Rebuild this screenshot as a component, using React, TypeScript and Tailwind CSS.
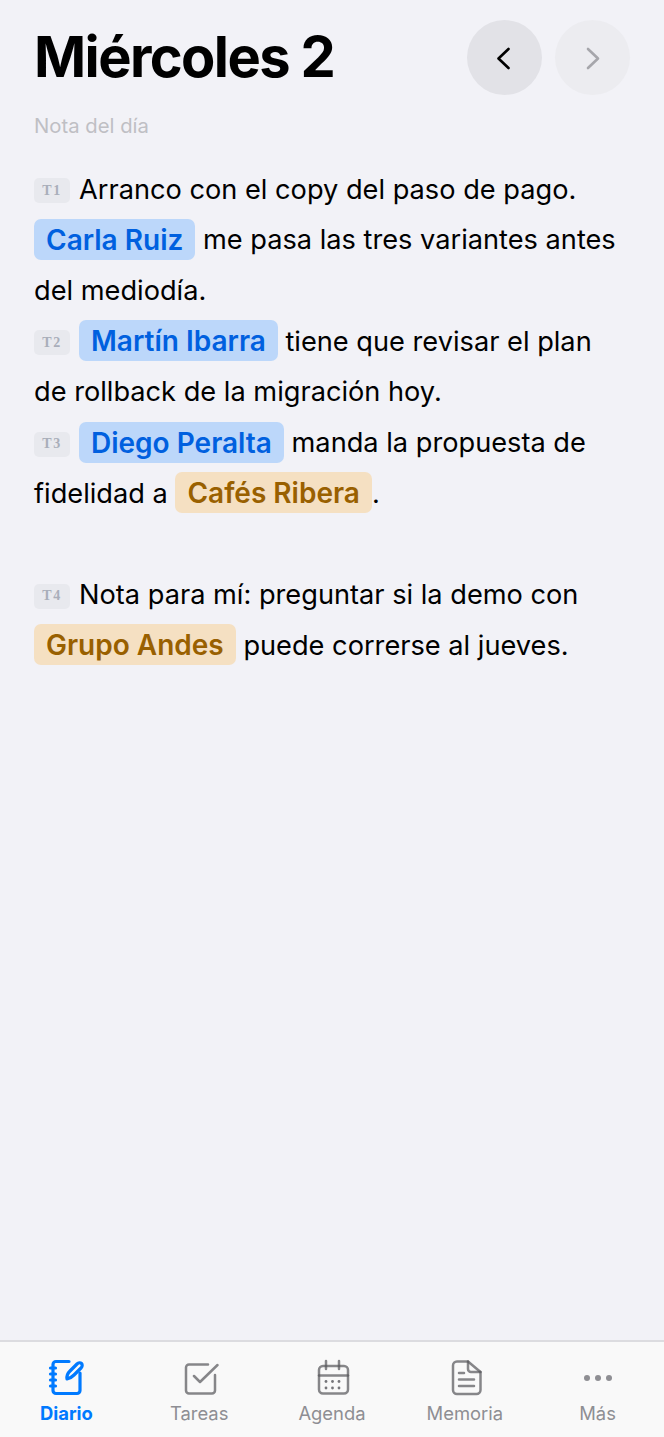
const blue = 'rounded-[7px] bg-[#bcd7fa] px-3 py-[3.500px] text-[28px] leading-none font-semibold text-[#0060df]';
const amber = 'rounded-[7px] bg-[#f5e0c2] px-3 py-[3.500px] text-[28px] leading-none font-semibold text-[#996000]';

function Tag({ label }: { label: string }) {
  return (
    <span className="mr-[9px] inline-flex h-[25px] w-[36px] translate-y-[-4px] items-center justify-center rounded-[5px] bg-[#e8e9ee] [font-family:'Liberation_Serif',serif] text-[14px] font-bold leading-none tracking-[1.500px] text-[#a9aeba]">
      {label}
    </span>
  );
}

function Mention({ kind, children }: { kind: 'person' | 'company'; children: string }) {
  return <span className={kind === 'person' ? blue : amber}>{children}</span>;
}

const tabs = [
  { label: 'Diario', active: true },
  { label: 'Tareas' },
  { label: 'Agenda' },
  { label: 'Memoria' },
  { label: 'Más' },
];

function TabIcon({ label }: { label: string }) {
  if (label === 'Diario') {
    return (
      <svg width="40" height="40" viewBox="0 0 40 40" fill="none" stroke="currentColor" strokeWidth="3.200" strokeLinecap="round" strokeLinejoin="round">
        <path d="M23 3.500H10a3 3 0 0 0-3 3v26a3 3 0 0 0 3 3h21a3 3 0 0 0 3-3V15" />
        <path d="M4.500 10h5M4.500 16h5M4.500 22h5M4.500 28h5" />
        <path d="M21 21c-.5-3 1-6 3-8l7-7c1.500-1.500 3.500-1.500 4.500-.5s1 3-.5 4.500l-7 7c-2 2-4.500 3.500-7 4z" />
      </svg>
    );
  }
  if (label === 'Tareas') {
    return (
      <svg width="40" height="40" viewBox="0 0 40 40" fill="none" stroke="#55555a" strokeOpacity=".7" strokeWidth="2.500" strokeLinecap="round" strokeLinejoin="round">
        <path d="M29 6.500H10a3 3 0 0 0-3 3v23a3 3 0 0 0 3 3h23a3 3 0 0 0 3-3V17" />
        <path d="M15 18l6 6L38.500 7" />
      </svg>
    );
  }
  if (label === 'Agenda') {
    return (
      <svg width="40" height="40" viewBox="0 0 40 40" fill="none" stroke="#55555a" strokeOpacity=".7" strokeWidth="2.500" strokeLinecap="round" strokeLinejoin="round">
        <rect x="7" y="8" width="29" height="27.500" rx="4" />
        <path d="M7 17.500h29" />
        <path d="M14 3v8" />
        <path d="M27 3v8" />
        <g fill="#55555a" fillOpacity=".8" stroke="none">
          <circle cx="14" cy="23.500" r="1.400" />
          <circle cx="20.500" cy="23.500" r="1.400" />
          <circle cx="27" cy="23.500" r="1.400" />
          <circle cx="14" cy="30" r="1.400" />
          <circle cx="20.500" cy="30" r="1.400" />
          <circle cx="27" cy="30" r="1.400" />
        </g>
      </svg>
    );
  }
  if (label === 'Memoria') {
    return (
      <svg width="40" height="40" viewBox="0 0 40 40" fill="none" stroke="#55555a" strokeOpacity=".7" strokeWidth="2.500" strokeLinecap="round" strokeLinejoin="round">
        <path d="M12 3.500h11L35.500 14v18a4 4 0 0 1-4 4H12a4 4 0 0 1-4-4V7.500a4 4 0 0 1 4-4z" />
        <path d="M23 3.500V11a3 3 0 0 0 3 3h9.500" />
        <path d="M14 15h5M14 21.500h15M14 28h15" />
      </svg>
    );
  }
  return (
    <svg width="40" height="40" viewBox="0 0 40 40" fill="#8e8e93">
      <circle cx="9" cy="20" r="3" />
      <circle cx="20" cy="20" r="3" />
      <circle cx="31" cy="20" r="3" />
    </svg>
  );
}

export default function App() {
  return (
    <div className="flex min-h-[1437px] w-[664px] flex-col bg-[#f2f2f7] font-['Inter',sans-serif] text-black">
      <header className="flex items-start justify-between px-[34px] pt-[20px]">
        <h1 className="text-[56px] font-bold leading-[75px] tracking-[-1.600px]">Miércoles 2</h1>
        <div className="flex gap-[13px]">
          <button className="flex h-[75px] w-[75px] items-center justify-center rounded-full bg-[#e2e2e7] text-black">
            <svg width="24" height="24" viewBox="0 0 24 24" fill="none" stroke="currentColor" strokeWidth="2.600" strokeLinecap="round" strokeLinejoin="round">
              <path d="M15.500 3 5.500 12.500l10 9.500" />
            </svg>
          </button>
          <button className="flex h-[75px] w-[75px] items-center justify-center rounded-full bg-[#ececf0] text-[#a6a6ab]">
            <svg width="24" height="24" viewBox="0 0 24 24" fill="none" stroke="currentColor" strokeWidth="2.600" strokeLinecap="round" strokeLinejoin="round">
              <path d="m7 3 10 9.500L7 22" />
            </svg>
          </button>
        </div>
      </header>

      <p className="px-[34px] pt-[17px] text-[20.300px] leading-[28px] text-[#bfbfc4]">Nota del día</p>

      <main className="flex-1 pl-[34px] pr-[34px] pt-[24.600px] text-[27.200px] leading-[50.700px]">
        <p>
          <Tag label="T1" />Arranco con el copy del paso de pago.
        </p>
        <p>
          <Mention kind="person">Carla Ruiz</Mention> me pasa las tres variantes antes del mediodía.
        </p>
        <p>
          <Tag label="T2" /><Mention kind="person">Martín Ibarra</Mention> tiene que revisar el plan de rollback de la migración hoy.
        </p>
        <p>
          <Tag label="T3" /><Mention kind="person">Diego Peralta</Mention> manda la propuesta de fidelidad a <Mention kind="company">Cafés Ribera</Mention>.
        </p>
        <p className="h-[50.700px]" />
        <p>
          <Tag label="T4" />Nota para mí: preguntar si la demo con <Mention kind="company">Grupo Andes</Mention> puede correrse al jueves.
        </p>
      </main>

      <nav className="flex h-[97px] border-t-2 border-[#dcdce0] bg-[#f9f9f9] pt-[16px]">
        {tabs.map((tab) => (
          <div
            key={tab.label}
            className={`flex flex-1 flex-col items-center ${tab.active ? 'font-bold text-[#007aff]' : 'text-[#8e8e93]'}`}
          >
            <TabIcon label={tab.label} />
            <span className="mt-[3px] text-[18.400px] leading-[24px]">{tab.label}</span>
          </div>
        ))}
      </nav>
    </div>
  );
}
